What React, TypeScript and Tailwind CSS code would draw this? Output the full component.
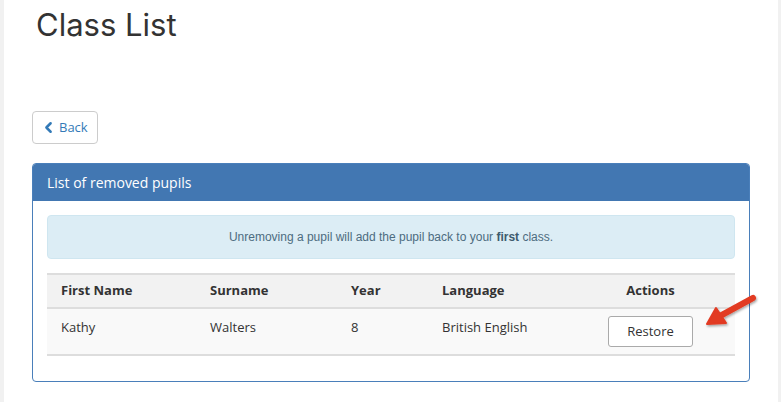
import { ChevronLeft } from "lucide-react";

const rows = [{ first: "Kathy", surname: "Walters", year: "8", language: "British English" }];

export default function App() {
  return (
    <div className="min-h-[402px] bg-[#f1f1f1] pl-[4px] pr-[3px] font-['Open_Sans',sans-serif] text-[#333]">
      <div className="relative min-h-[402px] bg-white pl-[28px] pr-[28px]">
        <h1 className="pl-[4px] pt-[5px] font-['Inter',sans-serif] text-[31px] leading-[40px] font-normal text-[#333]">
          Class List
        </h1>

        <div className="pt-[66px]">
          <button className="flex h-[33px] items-center gap-[2px] rounded-[4px] border border-[#ccc] bg-white pl-[8px] pr-[9px] text-[13px] text-[#337ab7]">
            <ChevronLeft size={17} strokeWidth={3.5} className="-ml-[1px]" />
            <span>Back</span>
          </button>
        </div>

        {/* panel */}
        <div className="mt-[19px] overflow-hidden rounded-[4px] border border-[#4a7fba]">
          <div className="flex h-[37px] items-center bg-[#4277b2] px-[14px] text-[14px] text-white">
            List of removed pupils
          </div>
          <div className="px-[14px] pt-[14px] pb-[25px]">
            <div className="flex h-[44px] items-center justify-center rounded-[4px] border border-[#cfe6f0] bg-[#dcedf5] font-['Liberation_Sans',sans-serif] text-[12px] text-[#4d6c80]">
              <span>
                Unremoving a pupil will add the pupil back to your <b className="text-[#3e5b6e]">first</b> class.
              </span>
            </div>

            <table className="mt-[14px] w-full border-collapse text-[13px]">
              <thead>
                <tr className="h-[34px] border-t-2 border-b-2 border-[#dddddd] bg-[#f2f2f2] text-[#333]">
                  <th className="w-[149px] px-[14px] text-left font-bold">First Name</th>
                  <th className="w-[141px] px-[14px] text-left font-bold">Surname</th>
                  <th className="w-[91px] px-[14px] text-left font-bold">Year</th>
                  <th className="w-[138px] px-[14px] text-left font-bold">Language</th>
                  <th className="px-[14px] text-center font-bold">Actions</th>
                </tr>
              </thead>
              <tbody>
                {rows.map((r) => (
                  <tr key={r.first} className="h-[47px] border-b-2 border-[#dddddd] bg-[#f9f9f9] align-top">
                    <td className="px-[14px] pt-[9px]">{r.first}</td>
                    <td className="px-[14px] pt-[9px]">{r.surname}</td>
                    <td className="px-[14px] pt-[9px]">{r.year}</td>
                    <td className="px-[14px] pt-[9px]">{r.language}</td>
                    <td className="px-[14px] pt-[7px] text-center">
                      <button className="h-[31px] w-[85px] rounded-[3px] border border-[#aaa] bg-white text-[13px] text-[#333]">
                        Restore
                      </button>
                    </td>
                  </tr>
                ))}
              </tbody>
            </table>
          </div>
        </div>

        {/* annotation arrow */}
        <svg className="absolute left-[692px] top-[288px]" width="68" height="46" viewBox="0 0 68 46">
          <defs>
            <filter id="sh" x="-20%" y="-20%" width="140%" height="140%">
              <feDropShadow dx="1" dy="1.5" stdDeviation="1.2" floodColor="#000" floodOpacity="0.35" />
            </filter>
          </defs>
          <g filter="url(#sh)">
            <path d="M57 10 L24 28" stroke="#e23a22" strokeWidth="6" strokeLinecap="round" fill="none" />
            <path d="M11 36 L20 20 L30 35 Z" fill="#e23a22" stroke="#e23a22" strokeWidth="2" strokeLinejoin="round" />
          </g>
        </svg>
      </div>
    </div>
  );
}
